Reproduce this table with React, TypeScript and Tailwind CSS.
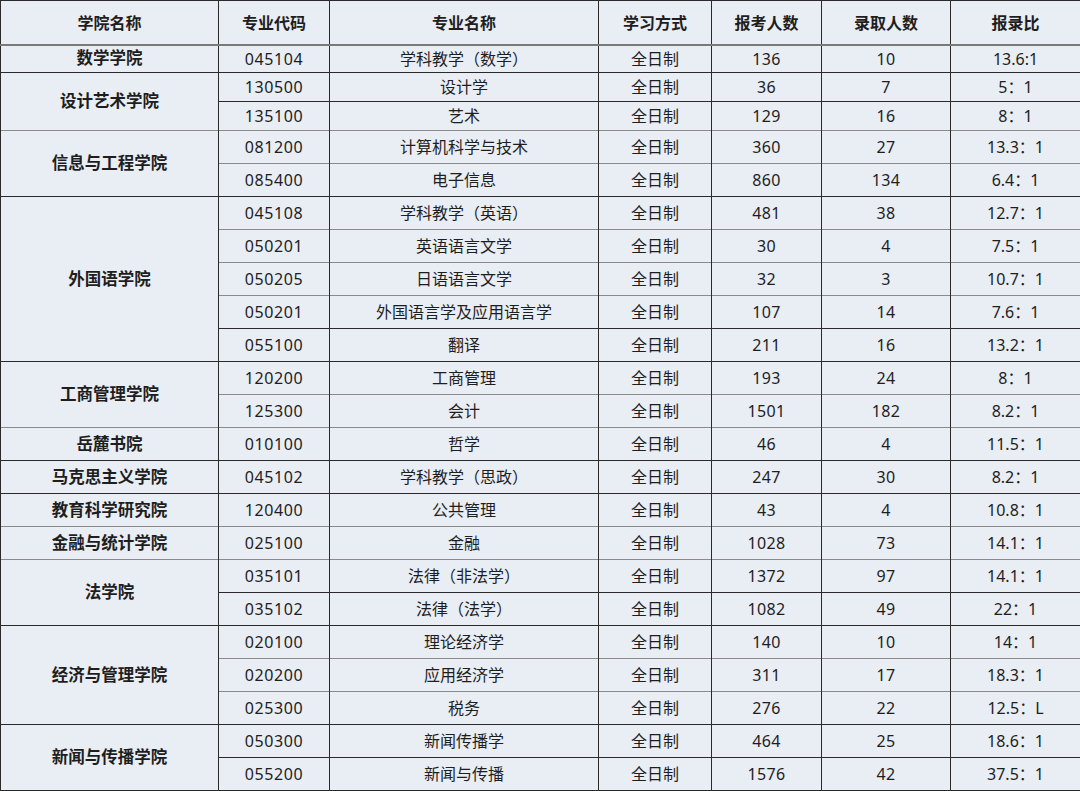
import React from "react";

type Row = { code: string; name: string; apply: string; admit: string; ratio: string; line: "d" | "g" };
type Group = { college: string; rows: Row[]; line: "d" | "g" };

const groups: Group[] = [
  { college: "数学学院", line: "g", rows: [{ code: "045104", name: "学科教学（数学）", apply: "136", admit: "10", ratio: "13.6:1", line: "g" }] },
  {
    college: "设计艺术学院", line: "d",
    rows: [
      { code: "130500", name: "设计学", apply: "36", admit: "7", ratio: "5：1", line: "d" },
      { code: "135100", name: "艺术", apply: "129", admit: "16", ratio: "8：1", line: "d" },
    ],
  },
  {
    college: "信息与工程学院", line: "g",
    rows: [
      { code: "081200", name: "计算机科学与技术", apply: "360", admit: "27", ratio: "13.3：1", line: "g" },
      { code: "085400", name: "电子信息", apply: "860", admit: "134", ratio: "6.4：1", line: "g" },
    ],
  },
  {
    college: "外国语学院", line: "d",
    rows: [
      { code: "045108", name: "学科教学（英语）", apply: "481", admit: "38", ratio: "12.7：1", line: "d" },
      { code: "050201", name: "英语语言文学", apply: "30", admit: "4", ratio: "7.5：1", line: "g" },
      { code: "050205", name: "日语语言文学", apply: "32", admit: "3", ratio: "10.7：1", line: "g" },
      { code: "050201", name: "外国语言学及应用语言学", apply: "107", admit: "14", ratio: "7.6：1", line: "g" },
      { code: "055100", name: "翻译", apply: "211", admit: "16", ratio: "13.2：1", line: "d" },
    ],
  },
  {
    college: "工商管理学院", line: "d",
    rows: [
      { code: "120200", name: "工商管理", apply: "193", admit: "24", ratio: "8：1", line: "d" },
      { code: "125300", name: "会计", apply: "1501", admit: "182", ratio: "8.2：1", line: "g" },
    ],
  },
  { college: "岳麓书院", line: "g", rows: [{ code: "010100", name: "哲学", apply: "46", admit: "4", ratio: "11.5：1", line: "g" }] },
  { college: "马克思主义学院", line: "d", rows: [{ code: "045102", name: "学科教学（思政）", apply: "247", admit: "30", ratio: "8.2：1", line: "d" }] },
  { college: "教育科学研究院", line: "d", rows: [{ code: "120400", name: "公共管理", apply: "43", admit: "4", ratio: "10.8：1", line: "d" }] },
  { college: "金融与统计学院", line: "g", rows: [{ code: "025100", name: "金融", apply: "1028", admit: "73", ratio: "14.1：1", line: "g" }] },
  {
    college: "法学院", line: "g",
    rows: [
      { code: "035101", name: "法律（非法学）", apply: "1372", admit: "97", ratio: "14.1：1", line: "g" },
      { code: "035102", name: "法律（法学）", apply: "1082", admit: "49", ratio: "22：1", line: "d" },
    ],
  },
  {
    college: "经济与管理学院", line: "d",
    rows: [
      { code: "020100", name: "理论经济学", apply: "140", admit: "10", ratio: "14：1", line: "d" },
      { code: "020200", name: "应用经济学", apply: "311", admit: "17", ratio: "18.3：1", line: "g" },
      { code: "025300", name: "税务", apply: "276", admit: "22", ratio: "12.5：L", line: "g" },
    ],
  },
  {
    college: "新闻与传播学院", line: "d",
    rows: [
      { code: "050300", name: "新闻传播学", apply: "464", admit: "25", ratio: "18.6：1", line: "d" },
      { code: "055200", name: "新闻与传播", apply: "1576", admit: "42", ratio: "37.5：1", line: "d" },
    ],
  },
];

const heights = [28, 29, 29, 33, 33];

export default function App() {
  let idx = 0;
  const font = { fontFamily: '"Noto Sans", "Noto Sans CJK SC", sans-serif' };
  return (
    <div className="w-[1080px] h-[791px] bg-white overflow-hidden" style={font}>
      <table className="w-[1080px] border-collapse bg-[#e9edf4] text-[16px] text-[#1e1e1e] border border-[#2a2a2a] table-fixed">
        <colgroup>
          <col className="w-[218px]" />
          <col className="w-[111px]" />
          <col className="w-[269px]" />
          <col className="w-[113px]" />
          <col className="w-[110px]" />
          <col className="w-[129px]" />
          <col className="w-[130px]" />
        </colgroup>
        <thead>
          <tr className="h-[44px] border-b-2 border-b-[#7a7a7a]">
            {["学院名称", "专业代码", "专业名称", "学习方式", "报考人数", "录取人数", "报录比"].map((h) => (
              <th key={h} className="border-x border-[#2a2a2a] font-bold text-center p-0 pt-[2px]">
                {h}
              </th>
            ))}
          </tr>
        </thead>
        <tbody>
          {groups.map((g, gi) =>
            g.rows.map((r, ri) => {
              const h = heights[idx] ?? 33;
              idx++;
              const lineCls = r.line === "d" ? "border-t-[#2a2a2a]" : "border-t-[#8a8a8a]";
              const firstCls = g.line === "d" ? "border-t-[#2a2a2a]" : "border-t-[#8a8a8a]";
              const cell = `border-x border-x-[#2a2a2a] border-t ${lineCls} text-center p-0 leading-none`;
              return (
                <tr key={`${gi}-${ri}`} style={{ height: h }}>
                  {ri === 0 && (
                    <td rowSpan={g.rows.length} className={`border-x border-x-[#2a2a2a] border-t ${firstCls} text-center p-0 font-bold text-[16.5px]`}>
                      {g.college}
                    </td>
                  )}
                  <td className={`${cell} tracking-[0.6px]`}>{r.code}</td>
                  <td className={cell}>{r.name}</td>
                  <td className={cell}>全日制</td>
                  <td className={`${cell} tracking-[0.3px]`}>{r.apply}</td>
                  <td className={`${cell} tracking-[0.3px]`}>{r.admit}</td>
                  <td className={cell}>{r.ratio}</td>
                </tr>
              );
            })
          )}
        </tbody>
      </table>
    </div>
  );
}
